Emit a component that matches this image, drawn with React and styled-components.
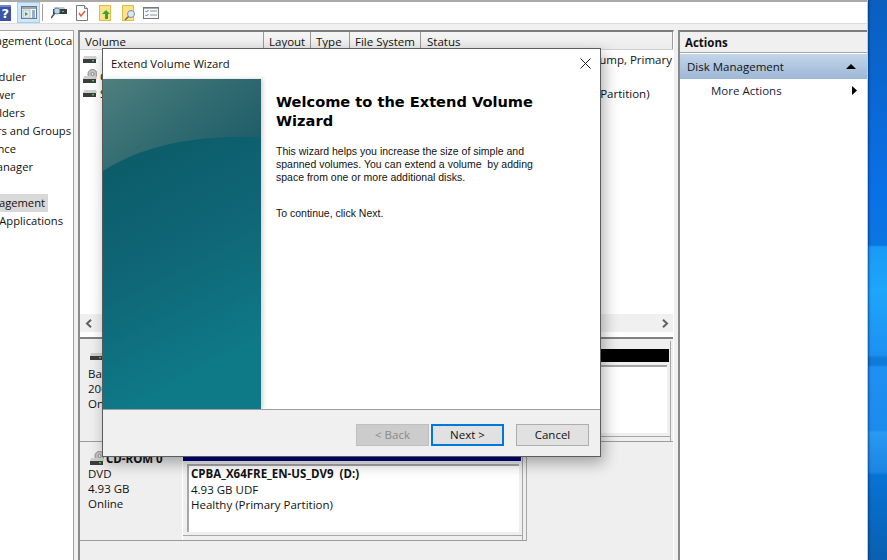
import React from 'react';
import styled, { createGlobalStyle } from 'styled-components';

const Global = createGlobalStyle`
  html, body { margin: 0; padding: 0; background: #fff; }
  * { box-sizing: border-box; }
  #root { width: 887px; height: 560px; overflow: hidden; }
`;
const UI = `"Open Sans", "Noto Sans", sans-serif`;
const Page = styled.div`
  position: relative; width: 887px; height: 560px; display: flex; overflow: hidden;
  font-family: ${UI}; font-size: 11.5px; color: #111;
`;
const Console = styled.div`
  width: 868px; height: 560px; flex: none; display: flex; flex-direction: column; background: #f0f0f0;
  border-right: 1px solid #c9c9c9; box-shadow: 1px 0 2px rgba(0,30,80,.55); z-index: 1;
`;
const Desktop = styled.div`
  width: 19px; height: 560px; flex: none;
  background: linear-gradient(180deg,
    #0a5fbe 0px, #0a70e6 190px, #0b76e0 245px, #1a9af5 247px, #1ea6fa 290px, #1c90f0 355px,
    #0f7ad8 358px, #0f7ad8 365px, #1e90f2 367px, #1c8cec 430px, #2a9af2 432px, #1c84e2 472px,
    #0872d4 475px, #0a5fb0 560px);
`;
const Toolbar = styled.div`
  height: 24px; flex: none; background: #fff; display: flex; align-items: center;
  border-top: 2px solid #a9a9a9; border-bottom: 1px solid #dcdcdc;
`;
const ToolSlot = styled.div`
  flex: none; display: flex; align-items: center; justify-content: center; height: 21px;
  width: ${p => p.$w}px; margin-left: ${p => p.$ml || 0}px;
  ${p => p.$active && 'background:#cce8ff;border:1px solid #99d1ff;'}
`;
const ToolSep = styled.div`width: 1px; height: 17px; background: #a0a0a0; margin-left: 2px; flex: none;`;
const Panes = styled.div`flex: 1; display: flex; padding-top: 6px; min-height: 0;`;
const TreePane = styled.div`
  width: 74px; flex: none; background: #fff; overflow: hidden;
  border-top: 1px solid #a6a6a6; border-right: 1px solid #a0a0a0; padding-top: 1px;
`;
const TreeRow = styled.div`
  height: 18px; line-height: 17px; display: flex; justify-content: flex-end; white-space: nowrap;
  width: ${p => p.$end}px; font-size: 11.2px;
`;
const TreeText = styled.span`
  flex: none; padding-right: 3px; ${p => p.$sel && 'background:#d9d9d9;'}
`;
const CenterPane = styled.div`
  width: 596px; margin-left: 4px; flex: none; display: flex; flex-direction: column;
  border-top: 2px solid #7d7d7d; border-left: 2px solid #8a8a8a; border-right: 1px solid #fff;
`;
const ListArea = styled.div`
  height: 307px; flex: none; display: flex; flex-direction: column; background: #fff;
  border-bottom: 2px solid #808080; overflow: hidden;
`;
const ListHead = styled.div`
  display: flex; height: 18px; flex: none;
  background: linear-gradient(#f5f5f5, #ebebeb); border-bottom: 1px solid #d0d0d0;
`;
const HeadCell = styled.div`
  width: ${p => p.$w}px; flex: ${p => (p.$grow ? 1 : 'none')}; padding: 1px 0 0 ${p => p.$pad || 5}px; line-height: 18px;
  border-right: 1px solid #9a9a9a; white-space: nowrap;
`;
const ListBody = styled.div`flex: 1; min-height: 0; padding-top: 1px; overflow: hidden;`;
const ListRow = styled.div`height: 17px; display: flex; align-items: center; white-space: nowrap;`;
const NameCell = styled.div`
  width: 343px; flex: none; display: flex; align-items: center; gap: 3px; padding-left: 3px; overflow: hidden;
`;
const StatusCell = styled.div`flex: 1; overflow: hidden; padding-left: 2px;`;
const HScroll = styled.div`
  height: 18px; flex: none; background: #f0f0f0; display: flex; align-items: center;
  justify-content: space-between; padding: 0 4px 0 5px; margin-bottom: 5px;
`;
const DiskArea = styled.div`flex: 1; padding-top: 2px; background: #efefef; min-height: 0;`;
const DiskRow = styled.div`
  display: flex; height: ${p => p.$h}px; border-bottom: 1px solid #9c9c9c;
  ${p => p.$short && 'width:447px;border-right:1px solid #a6a6a6;'}
`;
const DiskLabel = styled.div`
  width: 103px; flex: none; padding: ${p => p.$pt}px 0 0 8px; line-height: 15.2px;
  border-right: 1px solid #fff;
`;
const DiskIconRow = styled.div`
  height: 13px; display: flex; align-items: center; margin: 0 0 ${p => p.$mb}px 2px; gap: 2px;
`;
const DiskName = styled.div`font-weight: 700; line-height: 13px;`;
const Partition = styled.div`
  flex: 1; display: flex; flex-direction: column; padding: ${p => p.$pt}px 0 4px 0;
  border-right: 1px solid #a6a6a6; margin-right: ${p => p.$mr}px;
`;
const PartBar = styled.div`height: 13px; flex: none; margin-right: 1px; background: ${p => p.$c};`;
const PartFrame = styled.div`
  flex: 1; margin-top: 1px; padding: 2px 3px 3px 4px; background: #efefef;
  border-bottom: 1px solid #a6a6a6; display: flex; min-height: 0;
`;
const PartInner = styled.div`
  flex: 1; background: #fff; border-top: 2px solid #a6a6a6; border-left: 2px solid #a6a6a6;
  padding: 0 0 0 2px; line-height: 15.5px; white-space: nowrap; overflow: hidden;
`;
const BoldLine = styled.div`font-weight: 700;`;
const ActionsPane = styled.div`
  flex: 1; margin-left: 4px; display: flex; flex-direction: column; background: #fff;
  border-top: 2px solid #7d7d7d; border-left: 2px solid #8a8a8a;
`;
const ActionsHead = styled.div`
  height: 21px; flex: none; padding-left: 5px; line-height: 22px; font-weight: 700;
  background: #f0f0f0; border-bottom: 1px solid #a6a6a6;
`;
const ActionGroup = styled.div`
  height: 25px; flex: none; margin-top: 1px; padding: 0 11px 0 7px; display: flex; align-items: center;
  justify-content: space-between; background: linear-gradient(#c2d6ea, #9eb7d6);
`;
const ActionItem = styled.div`
  height: 23px; flex: none; padding: 0 10px 0 31px; display: flex; align-items: center;
  justify-content: space-between; color: #1a1a3a;
`;
const Wizard = styled.div`
  position: absolute; left: 102px; top: 48px; width: 499px; height: 409px; z-index: 5;
  display: flex; flex-direction: column; background: #fff; border: 1px solid #5c5c5c;
  box-shadow: 3px 6px 14px rgba(0,0,0,.32);
`;
const TitleBar = styled.div`
  height: 30px; flex: none; display: flex; align-items: center; justify-content: space-between;
  padding: 0 9px 2px 8px; font-size: 11.3px; color: #111;
`;
const WizardBody = styled.div`flex: 1; display: flex; min-height: 0;`;
const Banner = styled.div`
  width: 158px; flex: none; box-shadow: 2px 0 4px rgba(0,0,0,.18); line-height: 0;
`;
const Copy = styled.div`
  flex: 1; padding: 13px 54px 0 15px; font-family: "Liberation Sans", Arial, sans-serif;
  font-size: 10.5px; line-height: 13px; color: #111;
`;
const Heading = styled.h1`
  margin: 0 0 15px; font-family: "DejaVu Sans", Verdana, sans-serif; font-size: 14.6px; font-weight: 700;
  line-height: 19px; color: #000;
`;
const Para = styled.p`margin: 0 0 ${p => p.$mb || 0}px;`;
const WizardFoot = styled.div`
  height: 47px; flex: none; background: #f0f0f0; border-top: 1px solid #a0a0a0;
  display: flex; justify-content: flex-end; align-items: flex-start; padding: 14px 11px 0 0;
`;
const Btn = styled.div`
  width: 73px; height: 22px; display: flex; align-items: center; justify-content: center;
  font-size: 11.5px; padding-bottom: 1px; margin-left: ${p => p.$ml}px;
  background: ${p => (p.$off ? '#cccccc' : '#e1e1e1')};
  color: ${p => (p.$off ? '#8a8a8a' : '#111')};
  border: ${p => (p.$primary ? '2px solid #0078d7' : p.$off ? '1px solid #bfbfbf' : '1px solid #adadad')};
`;

const HelpIcon = () => (
  <svg width="11" height="16" viewBox="0 0 11 16">
    <rect width="11" height="16" fill="#3a52a8" />
    <rect width="11" height="2" fill="#6f86cc" />
    <text x="1.5" y="13" fontFamily="DejaVu Sans" fontWeight="700" fontSize="13" fill="#fff">?</text>
  </svg>
);
const ConsoleIcon = () => (
  <svg width="16" height="13" viewBox="0 0 16 13">
    <rect x=".5" y=".5" width="15" height="12" fill="#f5f5f5" stroke="#6b7a80" />
    <rect x="1" y="1" width="14" height="2" fill="#9aa7ad" />
    <rect x="2" y="4" width="7" height="8" fill="#dfe8ec" stroke="#8fa0a8" strokeWidth=".5" />
    <path d="M4 6l3 2-3 2z" fill="#2aa84a" />
    <path d="M11 5h3M11 7h3M11 9h3M11 11h3" stroke="#3a6aa8" />
  </svg>
);
const DiskSearchIcon = () => (
  <svg width="16" height="15" viewBox="0 0 16 15">
    <path d="M3 2h10l2 3H3z" fill="#c9c9c9" />
    <rect x="2" y="4" width="14" height="5" fill="#3b3b3b" />
    <rect x="11" y="6" width="2" height="1" fill="#3fe05a" />
    <circle cx="6" cy="6" r="3" fill="#b6d8ee" stroke="#6f8b9c" />
    <path d="M4 8L0 13" stroke="#555" strokeWidth="1.6" />
  </svg>
);
const CheckDocIcon = () => (
  <svg width="12" height="16" viewBox="0 0 12 16">
    <path d="M.5.5h8l3 3v12H.5z" fill="#fdfdfd" stroke="#7a7a7a" />
    <path d="M8.5.5v3h3" fill="#e4e4e4" stroke="#7a7a7a" />
    <path d="M3 8l2 3 4-5" fill="none" stroke="#e0603a" strokeWidth="1.5" />
  </svg>
);
const FolderUpIcon = () => (
  <svg width="12" height="16" viewBox="0 0 12 16">
    <rect x=".5" y=".5" width="11" height="15" fill="#fde28a" stroke="#e0bb4a" />
    <path d="M7 5l4 4H9v5H6V9H3z" fill="#2fa82f" />
  </svg>
);
const FolderSearchIcon = () => (
  <svg width="14" height="16" viewBox="0 0 14 16">
    <rect x=".5" y=".5" width="11" height="15" fill="#fde28a" stroke="#e0bb4a" />
    <circle cx="9" cy="9" r="3.5" fill="#d6eaf5" stroke="#7d8f9c" />
    <path d="M6.5 11.5L3 15" stroke="#7a6a50" strokeWidth="1.6" />
  </svg>
);
const ChecklistIcon = () => (
  <svg width="16" height="12" viewBox="0 0 16 12">
    <rect x=".5" y=".5" width="15" height="11" fill="#f8f8f8" stroke="#707a80" />
    <rect x="1" y="1" width="14" height="1" fill="#a4aeb4" />
    <path d="M2.5 4l1 1 2-2M2.5 8l1 1 2-2" fill="none" stroke="#3a78c8" />
    <path d="M7 4h7M7 8h7" stroke="#8a949a" />
  </svg>
);
const DriveIcon = ({ cd }) => (
  <svg width="14" height={cd ? 15 : 9} viewBox={cd ? '0 0 14 15' : '0 6 14 9'} style={{ flex: 'none' }}>
    {cd && <circle cx="9.5" cy="5" r="4.5" fill="#c4c4c4" stroke="#8c8c8c" />}
    {cd && <circle cx="9.5" cy="5" r="1.5" fill="#eee" stroke="#8c8c8c" />}
    <path d="M1 7h12l1 3H0z" fill="#cfcfcf" />
    <rect y="10" width="13" height="4" fill="#3c3c3c" />
    <rect x="9" y="11" width="2" height="1.4" fill="#39d84a" />
  </svg>
);
const CloseIcon = () => (
  <svg width="11" height="11" viewBox="0 0 11 11">
    <path d="M.5.5l10 10M10.5.5l-10 10" stroke="#222" strokeWidth="1" fill="none" />
  </svg>
);
const ChevronL = () => (
  <svg width="8" height="9" viewBox="0 0 8 9"><path d="M6 .8L2 4.5 6 8.2" fill="none" stroke="#606060" strokeWidth="2" /></svg>
);
const ChevronR = () => (
  <svg width="8" height="9" viewBox="0 0 8 9"><path d="M2 .8L6 4.5 2 8.2" fill="none" stroke="#606060" strokeWidth="2" /></svg>
);
const TriUp = () => (
  <svg width="10" height="5" viewBox="0 0 10 5"><path d="M5 0l5 5H0z" fill="#000" /></svg>
);
const TriRight = () => (
  <svg width="5" height="9" viewBox="0 0 5 9"><path d="M0 0l5 4.5L0 9z" fill="#000" /></svg>
);
const BannerArt = () => (
  <svg width="158" height="330" viewBox="0 0 158 330">
    <defs>
      <linearGradient id="base" x1="0" y1="0" x2=".25" y2="1">
        <stop offset="0" stopColor="#0a5560" />
        <stop offset=".6" stopColor="#0f6676" />
        <stop offset="1" stopColor="#0e7a88" />
      </linearGradient>
      <linearGradient id="sky" x1="0" y1="0" x2="1" y2=".7">
        <stop offset="0" stopColor="#4f7f7e" />
        <stop offset=".5" stopColor="#336d72" />
        <stop offset="1" stopColor="#1f5c68" />
      </linearGradient>
    </defs>
    <rect width="158" height="330" fill="url(#base)" />
    <path d="M0 0H158V58C110 57 50 60 0 92Z" fill="url(#sky)" />
  </svg>
);

const tree = [
  ['Computer Management (Local', 78], ['System Tools', 0], ['Task Scheduler', 29], ['Event Viewer', 18],
  ['Shared Folders', 28], ['Local Users and Groups', 74], ['Performance', 19], ['Device Manager', 36],
  ['Storage', 0], ['Disk Management', 48], ['Services and Applications', 66],
];

export default function App() {
  return (
    <Page>
      <Global />
      <Console>
        <Toolbar>
          <ToolSlot $w={11}><HelpIcon /></ToolSlot>
          <ToolSlot $w={23} $ml={6} $active><ConsoleIcon /></ToolSlot>
          <ToolSep />
          <ToolSlot $w={16} $ml={8}><DiskSearchIcon /></ToolSlot>
          <ToolSlot $w={12} $ml={9}><CheckDocIcon /></ToolSlot>
          <ToolSlot $w={12} $ml={11}><FolderUpIcon /></ToolSlot>
          <ToolSlot $w={14} $ml={11}><FolderSearchIcon /></ToolSlot>
          <ToolSlot $w={16} $ml={7}><ChecklistIcon /></ToolSlot>
        </Toolbar>
        <Panes>
          <TreePane>
            {tree.map(([t, e]) => (
              <TreeRow key={t} $end={e}>
                {e > 0 && <TreeText $sel={t === 'Disk Management'}>{t}</TreeText>}
              </TreeRow>
            ))}
          </TreePane>
          <CenterPane>
            <ListArea>
              <ListHead>
                <HeadCell $w={184}>Volume</HeadCell>
                <HeadCell $w={47}>Layout</HeadCell>
                <HeadCell $w={39}>Type</HeadCell>
                <HeadCell $w={71}>File System</HeadCell>
                <HeadCell $grow $pad={6}>Status</HeadCell>
              </ListHead>
              <ListBody>
                <ListRow>
                  <NameCell><DriveIcon /></NameCell>
                  <StatusCell>Healthy (Boot, Page File, Crash Dump, Primary Partition)</StatusCell>
                </ListRow>
                <ListRow>
                  <NameCell><DriveIcon cd /><span>CPBA_X64FRE_EN-US_DV9 (D:)</span></NameCell>
                  <StatusCell>Healthy (Primary Partition)</StatusCell>
                </ListRow>
                <ListRow>
                  <NameCell><DriveIcon /><span>System Reserved</span></NameCell>
                  <StatusCell>Healthy (System, Active, Primary Partition)</StatusCell>
                </ListRow>
              </ListBody>
              <HScroll><ChevronL /><ChevronR /></HScroll>
            </ListArea>
            <DiskArea>
              <DiskRow $h={101}>
                <DiskLabel $pt={8.5}>
                  <DiskIconRow $mb={3}><DriveIcon /></DiskIconRow>
                  <div>Basic</div><div>200.00 GB</div><div>Online</div>
                </DiskLabel>
                <Partition $mr={2} $pt={8}>
                  <PartBar $c="#000" />
                  <PartFrame>
                    <PartInner />
                  </PartFrame>
                </Partition>
              </DiskRow>
              <DiskRow $h={99} $short>
                <DiskLabel $pt={9.5}>
                  <DiskIconRow $mb={1}><DriveIcon cd /><DiskName>CD-ROM 0</DiskName></DiskIconRow>
                  <div>DVD</div><div>4.93 GB</div><div>Online</div>
                </DiskLabel>
                <Partition $mr={3} $pt={6}>
                  <PartBar $c="#000080" />
                  <PartFrame>
                    <PartInner>
                      <BoldLine>CPBA_X64FRE_EN-US_DV9&nbsp; (D:)</BoldLine>
                      <div>4.93 GB UDF</div>
                      <div>Healthy (Primary Partition)</div>
                    </PartInner>
                  </PartFrame>
                </Partition>
              </DiskRow>
            </DiskArea>
          </CenterPane>
          <ActionsPane>
            <ActionsHead>Actions</ActionsHead>
            <ActionGroup><span>Disk Management</span><TriUp /></ActionGroup>
            <ActionItem><span>More Actions</span><TriRight /></ActionItem>
          </ActionsPane>
        </Panes>
      </Console>
      <Desktop />
      <Wizard>
        <TitleBar><span>Extend Volume Wizard</span><CloseIcon /></TitleBar>
        <WizardBody>
          <Banner><BannerArt /></Banner>
          <Copy>
            <Heading>Welcome to the Extend Volume Wizard</Heading>
            <Para $mb={23}>
              This wizard helps you increase the size of simple and spanned volumes. You can extend a volume&nbsp; by adding space from one or more additional disks.
            </Para>
            <Para>To continue, click Next.</Para>
          </Copy>
        </WizardBody>
        <WizardFoot>
          <Btn $off $ml={0}>&lt; Back</Btn>
          <Btn $primary $ml={2}>Next &gt;</Btn>
          <Btn $ml={12}>Cancel</Btn>
        </WizardFoot>
      </Wizard>
    </Page>
  );
}
